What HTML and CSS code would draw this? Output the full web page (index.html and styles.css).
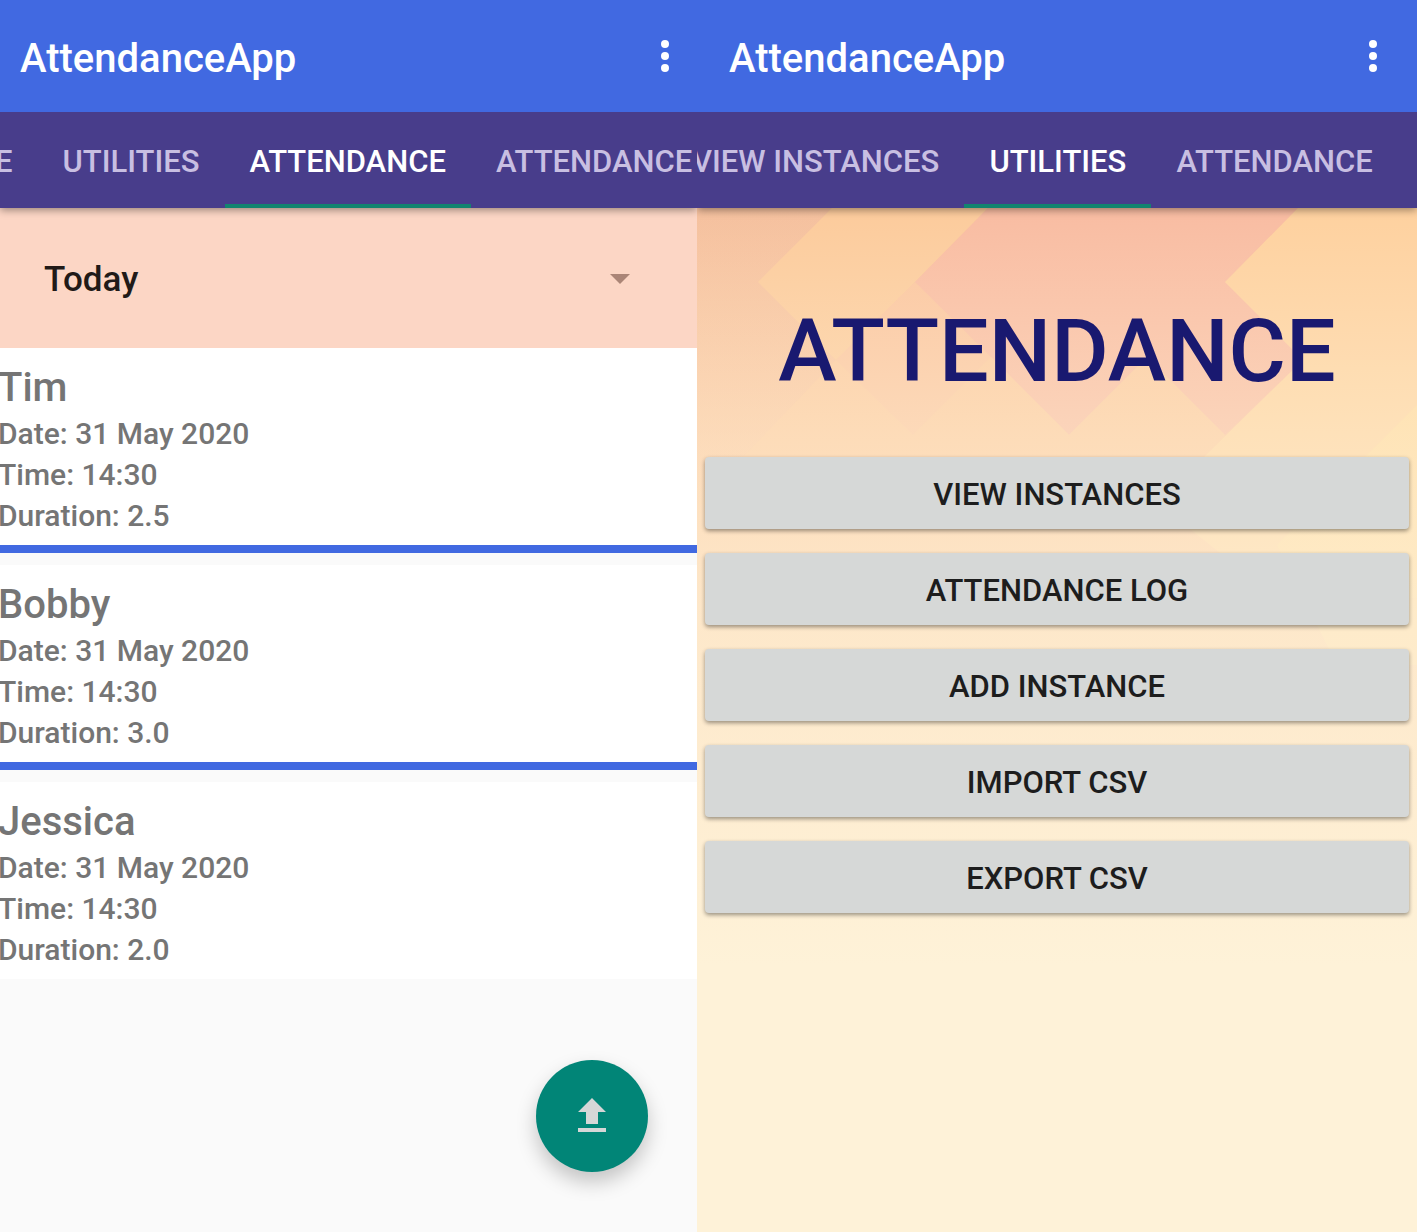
FILE: index.html
```html
<!DOCTYPE html>
<html lang="en">
<head>
  <meta charset="utf-8">
  <meta name="viewport" content="width=device-width, initial-scale=1">
  <title>AttendanceApp</title>
  <link rel="stylesheet" href="styles.css">
</head>
<body>
  <div class="screens">
    <section class="screen screen-log">
      <header class="app-bar">
        <h1 class="app-title">AttendanceApp</h1>
        <button class="menu-button" type="button" aria-label="More options">
          <svg width="8" height="32" viewBox="0 0 8 32" fill="currentColor"><circle cx="4" cy="4" r="4"/><circle cx="4" cy="16" r="4"/><circle cx="4" cy="28" r="4"/></svg>
        </button>
      </header>
      <nav class="tabs">
        <a class="tab" href="#">E</a>
        <a class="tab" href="#">UTILITIES</a>
        <a class="tab tab-active" href="#" aria-current="page">ATTENDANCE</a>
        <a class="tab" href="#">ATTENDANCE</a>
      </nav>
      <main class="log">
        <div class="filter">
          <select class="filter-select" aria-label="Period">
            <option>Today</option>
          </select>
          <svg class="filter-arrow" width="20" height="10" viewBox="0 0 20 10" fill="currentColor"><path d="M0 0h20L10 10z"/></svg>
        </div>
        <ul class="records">
          <li class="record">
            <h2 class="record-name">Tim</h2>
            <p class="record-line">Date: 31 May 2020</p>
            <p class="record-line">Time: 14:30</p>
            <p class="record-line">Duration: 2.5</p>
          </li>
          <li class="record">
            <h2 class="record-name">Bobby</h2>
            <p class="record-line">Date: 31 May 2020</p>
            <p class="record-line">Time: 14:30</p>
            <p class="record-line">Duration: 3.0</p>
          </li>
          <li class="record">
            <h2 class="record-name">Jessica</h2>
            <p class="record-line">Date: 31 May 2020</p>
            <p class="record-line">Time: 14:30</p>
            <p class="record-line">Duration: 2.0</p>
          </li>
        </ul>
      </main>
      <button class="fab" type="button" aria-label="Upload">
        <svg width="28" height="34" viewBox="0 0 28 34" fill="currentColor"><path d="M14 0l14 14h-8v12H8V14H0zM0 30h28v4H0z"/></svg>
      </button>
    </section>

    <section class="screen screen-utilities">
      <header class="app-bar">
        <h1 class="app-title">AttendanceApp</h1>
        <button class="menu-button" type="button" aria-label="More options">
          <svg width="8" height="32" viewBox="0 0 8 32" fill="currentColor"><circle cx="4" cy="4" r="4"/><circle cx="4" cy="16" r="4"/><circle cx="4" cy="28" r="4"/></svg>
        </button>
      </header>
      <nav class="tabs">
        <a class="tab" href="#">VIEW INSTANCES</a>
        <a class="tab tab-active" href="#" aria-current="page">UTILITIES</a>
        <a class="tab" href="#">ATTENDANCE</a>
      </nav>
      <main class="utilities">
        <svg class="backdrop" viewBox="0 0 720 1024" preserveAspectRatio="none" aria-hidden="true">
          <defs>
            <linearGradient id="fade" x1="0" y1="0" x2="0" y2="1">
              <stop offset="0" stop-color="#fef2d8" stop-opacity="0"/>
              <stop offset="0.22" stop-color="#fef2d8" stop-opacity="0.45"/>
              <stop offset="0.4" stop-color="#fef2d8" stop-opacity="0.75"/>
              <stop offset="0.74" stop-color="#fef2d8"/>
            </linearGradient>
            <linearGradient id="left" x1="0" y1="0" x2="0" y2="1">
              <stop offset="0" stop-color="#f5c09e"/>
              <stop offset="0.3" stop-color="#fcc9a0"/>
            </linearGradient>
          </defs>
          <path fill="url(#left)" d="M0 0h720v1024H0z"/>
          <path fill="#fccb9c" d="M135 0h156l-73 74-79 78-78-78z"/>
          <path fill="#fcc99e" d="M139 152l79-78 76 75 78 78v70H0z"/>
          <path fill="#f9bca2" d="M291 0h310l-73 74 78 78-78 75-78-78-78 78-78-78-76-75z"/>
          <path fill="#f9bca2" fill-opacity="0.3" d="M218 74l76 75-78 78-77-75z"/>
          <path fill="#fcc99e" d="M294 149l78 78 78-78 78 78-20 70H216v-70z"/>
          <path fill="#fed19f" d="M601 0h119v152H606l-78-78z"/>
          <path fill="#fed3a0" d="M606 152h114v238H580L460 295z"/>
          <path fill="#ffde9c" d="M720 197v260h-80l-60-120z" fill-opacity="0.6"/>
          <path fill="url(#fade)" d="M0 0h720v1024H0z"/>
        </svg>
        <h2 class="utilities-title">ATTENDANCE</h2>
        <div class="actions">
          <button class="action" type="button">VIEW INSTANCES</button>
          <button class="action" type="button">ATTENDANCE LOG</button>
          <button class="action" type="button">ADD INSTANCE</button>
          <button class="action" type="button">IMPORT CSV</button>
          <button class="action" type="button">EXPORT CSV</button>
        </div>
      </main>
    </section>
  </div>
</body>
</html>
```
FILE: styles.css
```css
* {
  box-sizing: border-box;
}

body,
h1,
h2,
p,
ul {
  margin: 0;
  padding: 0;
}

body {
  font-family: Roboto, "Liberation Sans", sans-serif;
  font-weight: 500;
}

button,
select {
  border: 0;
  font: inherit;
  cursor: pointer;
}

.screens {
  display: grid;
  grid-template-columns: 697fr 720fr;
  min-height: 100vh;
}

.screen {
  position: relative;
  display: flex;
  flex-direction: column;
  min-width: 0;
  overflow: hidden;
  background: #fafafa;
}

/* App bar */

.app-bar {
  position: relative;
  z-index: 2;
  display: flex;
  align-items: center;
  justify-content: space-between;
  height: 112px;
  padding: 0 20px;
  background: #4169e1;
  color: #fff;
}

.screen-utilities .app-bar {
  padding: 0 32px;
}

.app-title {
  padding-top: 6px;
  font-size: 40px;
  font-weight: 500;
  line-height: 48px;
}

.menu-button {
  display: flex;
  justify-content: center;
  width: 24px;
  padding: 0;
  background: none;
  color: #fff;
}

/* Tabs, scrolled part of the way along */

.tabs {
  position: relative;
  z-index: 1;
  display: flex;
  height: 96px;
  background: #483d8b;
  box-shadow: 0 2px 8px rgba(0, 0, 0, 0.4);
}

.tab {
  flex: none;
  padding: 0 25px;
  border-bottom: 4px solid transparent;
  color: #c8bfe2;
  font-size: 31px;
  line-height: 100px;
  text-decoration: none;
  white-space: nowrap;
}

.tab:first-child {
  margin-left: -30px;
}

.tab-active {
  border-bottom-color: #12846f;
  color: #fff;
}

/* Attendance log */

.filter {
  position: relative;
  height: 140px;
  background: #fcd6c5;
}

.filter-select {
  width: 100%;
  height: 100%;
  padding: 2px 44px 0;
  appearance: none;
  background: transparent;
  color: #211a18;
  font-size: 35px;
}

.filter-arrow {
  position: absolute;
  top: 66px;
  right: 67px;
  color: #ab8577;
  pointer-events: none;
}

.records {
  display: flex;
  flex-direction: column;
  gap: 12px;
  list-style: none;
}

.record {
  padding: 15px 0 9px;
  background: #fff;
  color: #757575;
  text-indent: -2px;
}

.record:not(:last-child) {
  border-bottom: 8px solid #4169e1;
}

.record-name {
  font-size: 40px;
  font-weight: 500;
  line-height: 50px;
}

.record-line {
  font-size: 30px;
  line-height: 41px;
}

.fab {
  position: absolute;
  right: 49px;
  bottom: 60px;
  display: flex;
  align-items: center;
  justify-content: center;
  width: 112px;
  height: 112px;
  padding: 0 0 2px;
  border-radius: 50%;
  background: #018577;
  box-shadow: 0 10px 20px rgba(0, 0, 0, 0.22);
  color: #d6d7d7;
}

/* Utilities */

.utilities {
  position: relative;
  flex: 1;
  padding: 91px 8px 40px;
  background: #fef2d8;
}

.backdrop {
  position: absolute;
  inset: 0;
  width: 100%;
  height: 100%;
}

.utilities-title {
  position: relative;
  margin-bottom: 54px;
  color: #191970;
  font-size: 88px;
  font-weight: 500;
  line-height: 104px;
  text-align: center;
}

.actions {
  position: relative;
  display: grid;
  gap: 24px;
}

.action {
  height: 72px;
  padding: 2px 16px 0;
  border-radius: 4px;
  background: #d6d8d7;
  box-shadow: 0 2px 4px rgba(0, 0, 0, 0.4);
  color: #1d1d1d;
  font-size: 31px;
}
```
